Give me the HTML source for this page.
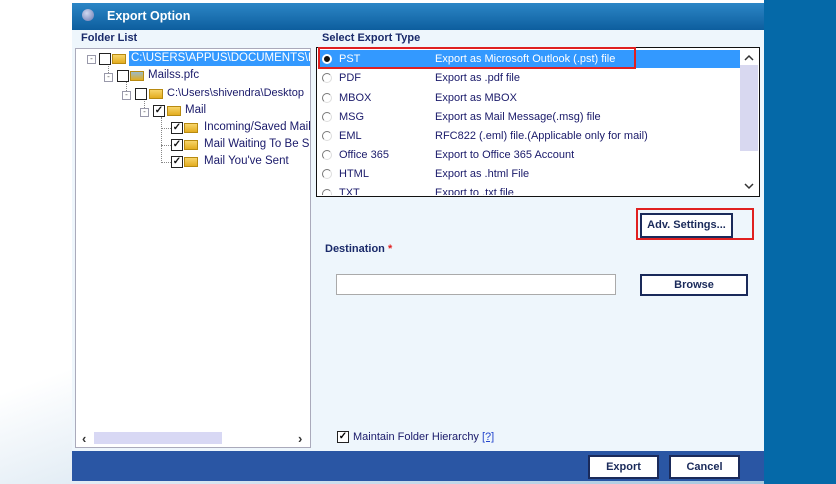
<!DOCTYPE html>
<html><head><style>
*{margin:0;padding:0;box-sizing:border-box}
body{width:836px;height:484px;position:relative;overflow:hidden;font-family:"Liberation Sans",sans-serif;background:linear-gradient(160deg,#fff 0%,#fff 50%,#cfe0ee 75%,#9fc3dc 100%)}
.a{position:absolute}
.t{font-size:11px;color:#1a1a6a;white-space:nowrap}
.b{font-weight:bold;color:#1a2a6a;font-size:11px}
.chk{position:absolute;width:12px;height:12px;border:1px solid #222;background:#fff;font-size:10px;line-height:10px;text-align:center;font-weight:bold;color:#111}
.fold{position:absolute;width:14px;height:10px;background:linear-gradient(#f7d56a,#e3ad1f);border:1px solid #b88a10}
.pm{position:absolute;width:9px;height:9px;border:1px solid #99a;font-size:8px;line-height:6px;text-align:center;color:#555;background:#fff}
.radio{position:absolute;width:10px;height:10px;border-radius:50%;border:1px solid #777;border-right-color:#ddd;border-bottom-color:#ddd;background:#fff}
.btn{position:absolute;background:#fff;border:2px solid #1a2a5a;font-weight:bold;font-size:11px;color:#1a2a5a;text-align:center}
</style></head><body>
<div class="a" style="left:764px;top:0;width:72px;height:484px;background:#0569a8"></div>
<div class="a" style="left:72px;top:3px;width:692px;height:478px;background:#eef6fc"></div>
<div class="a" style="left:72px;top:3px;width:692px;height:27px;background:linear-gradient(#2c86c6,#0d5e9e)"></div>
<div class="a" style="left:82px;top:9px;width:12px;height:12px;border-radius:50%;background:radial-gradient(circle at 40% 35%,#cfd8f0,#6a78b0)"></div>
<div class="a" style="left:107px;top:9px;color:#fff;font-weight:bold;font-size:12.5px">Export Option</div>
<div class="a b" style="left:81px;top:32px">Folder List</div>
<div class="a b" style="left:322px;top:32px">Select Export Type</div>
<div class="a" style="left:75px;top:48px;width:236px;height:400px;background:#fff;border:1px solid #aab"></div>
<!-- tree lines -->
<div class="a" style="left:92px;top:64px;width:1px;height:0;border-left:1px dotted #888"></div>
<div class="a" style="left:108px;top:64px;height:9px;border-left:1px dotted #888"></div>
<div class="a" style="left:126px;top:82px;height:9px;border-left:1px dotted #888"></div>
<div class="a" style="left:144px;top:99px;height:9px;border-left:1px dotted #888"></div>
<div class="a" style="left:161px;top:117px;height:46px;border-left:1px dotted #888"></div>
<div class="a" style="left:161px;top:128px;width:10px;border-top:1px dotted #888"></div>
<div class="a" style="left:161px;top:145px;width:10px;border-top:1px dotted #888"></div>
<div class="a" style="left:161px;top:162px;width:10px;border-top:1px dotted #888"></div>
<!-- tree -->
<div class="pm" style="left:87px;top:55px">-</div>
<div class="chk" style="left:99px;top:53px"></div>
<div class="fold" style="left:112px;top:54px"></div>
<div class="a t" style="left:129px;top:51px;width:181px;height:15px;background:#3399ff;color:#fff;padding:1px 2px;overflow:hidden;font-size:11.5px">C:\USERS\APPUS\DOCUMENTS\DOC</div>
<div class="pm" style="left:104px;top:73px">-</div>
<div class="chk" style="left:117px;top:70px"></div>
<div class="fold" style="left:130px;top:71px;background:linear-gradient(#9bc,#e3ad1f)"></div>
<div class="a t" style="left:148px;top:69px;font-size:11.5px">Mailss.pfc</div>
<div class="pm" style="left:122px;top:91px">-</div>
<div class="chk" style="left:135px;top:88px"></div>
<div class="fold" style="left:149px;top:89px"></div>
<div class="a t" style="left:167px;top:87px;font-size:11px;width:143px;overflow:hidden">C:\Users\shivendra\Desktop</div>
<div class="pm" style="left:140px;top:108px">-</div>
<div class="chk" style="left:153px;top:105px">✓</div>
<div class="fold" style="left:167px;top:106px"></div>
<div class="a t" style="left:185px;top:104px;font-size:11.5px">Mail</div>
<div class="chk" style="left:171px;top:122px">✓</div><div class="fold" style="left:184px;top:123px"></div>
<div class="a t" style="left:204px;top:121px;font-size:11.5px;width:106px;overflow:hidden">Incoming/Saved Mail</div>
<div class="chk" style="left:171px;top:139px">✓</div><div class="fold" style="left:184px;top:140px"></div>
<div class="a t" style="left:204px;top:138px;font-size:11.5px;width:106px;overflow:hidden">Mail Waiting To Be Sent</div>
<div class="chk" style="left:171px;top:156px">✓</div><div class="fold" style="left:184px;top:157px"></div>
<div class="a t" style="left:204px;top:155px;font-size:11.5px">Mail You've Sent</div>
<div class="a" style="left:82px;top:431px;font-size:13px;color:#333;font-weight:bold">‹</div>
<div class="a" style="left:94px;top:432px;width:128px;height:12px;background:#d8d8f4"></div>
<div class="a" style="left:298px;top:431px;font-size:13px;color:#333;font-weight:bold">›</div>
<!-- list -->
<div class="a" style="left:316px;top:47px;width:444px;height:150px;background:#fff;border:1px solid #111"></div>
<div class="a" style="left:318px;top:50px;width:422px;height:18px;background:#3399ff"></div>
<div class="a" style="left:318px;top:47px;width:318px;height:22px;border:2px solid #e02020"></div>
<div class="a" style="left:740px;top:65px;width:18px;height:86px;background:#d8d8f0"></div>
<svg class="a" style="left:744px;top:54px" width="10" height="8"><path d="M1 6L5 2L9 6" fill="none" stroke="#333" stroke-width="1.5"/></svg>
<svg class="a" style="left:744px;top:182px" width="10" height="8"><path d="M1 2L5 6L9 2" fill="none" stroke="#333" stroke-width="1.5"/></svg>
<div class="radio" style="left:322px;top:54px;background:#111;border:2px solid #fff"></div>
<div class="a t" style="left:339px;top:53px;color:#fff">PST</div><div class="a t" style="left:435px;top:53px;color:#fff">Export as Microsoft Outlook (.pst) file</div>
<div class="radio" style="left:322px;top:73px"></div><div class="a t" style="left:339px;top:72px">PDF</div><div class="a t" style="left:435px;top:72px">Export as .pdf file</div>
<div class="radio" style="left:322px;top:93px"></div><div class="a t" style="left:339px;top:92px">MBOX</div><div class="a t" style="left:435px;top:92px">Export as MBOX</div>
<div class="radio" style="left:322px;top:112px"></div><div class="a t" style="left:339px;top:111px">MSG</div><div class="a t" style="left:435px;top:111px">Export as Mail Message(.msg) file</div>
<div class="radio" style="left:322px;top:131px"></div><div class="a t" style="left:339px;top:130px">EML</div><div class="a t" style="left:435px;top:130px">RFC822 (.eml) file.(Applicable only for mail)</div>
<div class="radio" style="left:322px;top:150px"></div><div class="a t" style="left:339px;top:149px">Office 365</div><div class="a t" style="left:435px;top:149px">Export to Office 365 Account</div>
<div class="radio" style="left:322px;top:169px"></div><div class="a t" style="left:339px;top:168px">HTML</div><div class="a t" style="left:435px;top:168px">Export as .html File</div>
<div class="a" style="left:318px;top:186px;width:420px;height:9px;overflow:hidden"><div class="radio" style="left:4px;top:3px"></div><div class="a t" style="left:21px;top:1px">TXT</div><div class="a t" style="left:117px;top:1px">Export to .txt file</div></div>
<div class="a" style="left:636px;top:208px;width:118px;height:32px;border:2px solid #e02020"></div>
<div class="btn" style="left:640px;top:213px;width:93px;height:25px;line-height:21px">Adv. Settings...</div>
<div class="a b" style="left:325px;top:243px">Destination <span style="color:#e02020">*</span></div>
<div class="a" style="left:336px;top:274px;width:280px;height:21px;background:#fff;border:1px solid #aaa"></div>
<div class="btn" style="left:640px;top:274px;width:108px;height:22px;line-height:18px">Browse</div>
<div class="a" style="left:337px;top:431px;width:12px;height:12px;border:1px solid #222;background:#fff;font-size:10px;line-height:10px;text-align:center;font-weight:bold">✓</div>
<div class="a t" style="left:353px;top:431px">Maintain Folder Hierarchy <span style="color:#2244cc;text-decoration:underline">[?]</span></div>
<div class="a" style="left:72px;top:451px;width:692px;height:30px;background:#2a56a4"></div>
<div class="btn" style="left:588px;top:455px;width:71px;height:24px;line-height:20px">Export</div>
<div class="btn" style="left:669px;top:455px;width:71px;height:24px;line-height:20px">Cancel</div>
</body></html>
